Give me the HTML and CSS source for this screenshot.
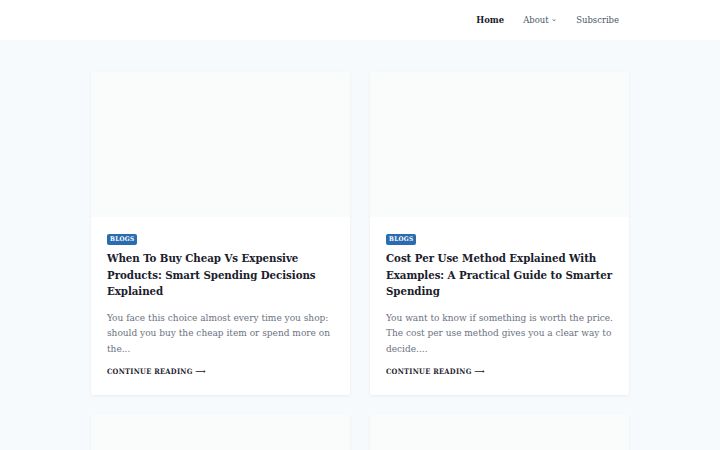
FILE: index.html
```html
<!DOCTYPE html>
<html lang="en">
<head>
<meta charset="utf-8">
<title>Blog</title>
<link rel="stylesheet" href="styles.css">
</head>
<body>
<header class="site-header">
  <div class="header-inner">
    <nav class="main-nav">
      <a class="nav-link current" href="#">Home</a>
      <a class="nav-link" href="#">About <span class="caret">&#8964;</span></a>
      <a class="nav-link" href="#">Subscribe</a>
    </nav>
  </div>
</header>
<main class="site-main">
  <div class="post-grid">
    <article class="post-card">
      <div class="post-thumb"></div>
      <div class="post-body">
        <div class="post-meta"><span class="post-cat">BLOGS</span></div>
        <h2 class="post-title">When To Buy Cheap Vs Expensive Products: Smart Spending Decisions Explained</h2>
        <p class="post-excerpt">You face this choice almost every time you shop: should you buy the cheap item or spend more on the...</p>
        <a class="post-more" href="#">CONTINUE READING <span class="arrow">&#10230;</span></a>
      </div>
    </article>
    <article class="post-card">
      <div class="post-thumb"></div>
      <div class="post-body">
        <div class="post-meta"><span class="post-cat">BLOGS</span></div>
        <h2 class="post-title">Cost Per Use Method Explained With Examples: A Practical Guide to Smarter Spending</h2>
        <p class="post-excerpt">You want to know if something is worth the price. The cost per use method gives you a clear way to decide....</p>
        <a class="post-more" href="#">CONTINUE READING <span class="arrow">&#10230;</span></a>
      </div>
    </article>
    <article class="post-card">
      <div class="post-thumb"></div>
    </article>
    <article class="post-card">
      <div class="post-thumb"></div>
    </article>
  </div>
</main>
</body>
</html>
```
FILE: styles.css
```css
* { box-sizing: border-box; }
html, body { margin: 0; padding: 0; }
body {
  background: #f7fafc;
  font-family: "DejaVu Serif Condensed", "DejaVu Serif", serif;
  font-stretch: condensed;
  color: #2d3748;
  overflow: hidden;
  height: 450px;
}
a { text-decoration: none; color: inherit; }

.site-header {
  background: #ffffff;
  height: 40px;
}
.header-inner {
  width: 538px;
  margin: 0 auto;
  height: 100%;
  display: flex;
  justify-content: flex-end;
  align-items: center;
  padding-right: 10px;
}
.main-nav {
  display: flex;
  gap: 19px;
  align-items: center;
  font-size: 9.4px;
  color: #4a5568;
  padding-bottom: 1px;
}
.nav-link.current { color: #1a202c; font-weight: bold; }
.caret { font-size: 7px; position: relative; top: -2px; }

.site-main {
  padding-top: 32px;
}
.post-grid {
  width: 538px;
  margin: 0 auto;
  display: grid;
  grid-template-columns: 259px 259px;
  column-gap: 20px;
  row-gap: 19px;
}
.post-card {
  background: #ffffff;
  border-radius: 3px;
  box-shadow: 0 1px 3px rgba(0, 0, 0, 0.06);
  overflow: hidden;
}
.post-thumb {
  height: 145px;
  background: #fafbfb;
}
.post-body {
  padding: 17px 14px 19px 16px;
}
.post-meta {
  display: flex;
  line-height: 10px;
}
.post-cat {
  display: block;
  background: #2b6cb0;
  color: #ffffff;
  font-size: 6.4px;
  font-weight: bold;
  letter-spacing: 0.3px;
  padding: 1px 3px;
  border-radius: 2px;
  line-height: 9px;
}
.post-title {
  margin: 5px 0 0;
  font-size: 11.4px;
  line-height: 16.5px;
  font-weight: bold;
  letter-spacing: -0.05px;
  color: #1a202c;
}
.post-excerpt {
  margin: 10px 0 0;
  font-size: 10px;
  line-height: 15.5px;
  color: #6b7280;
  max-width: 227px;
}
.post-more {
  display: block;
  margin-top: 10px;
  font-size: 7.4px;
  font-weight: bold;
  letter-spacing: 0.3px;
  color: #1a202c;
}
.arrow { font-size: 8px; }
```
